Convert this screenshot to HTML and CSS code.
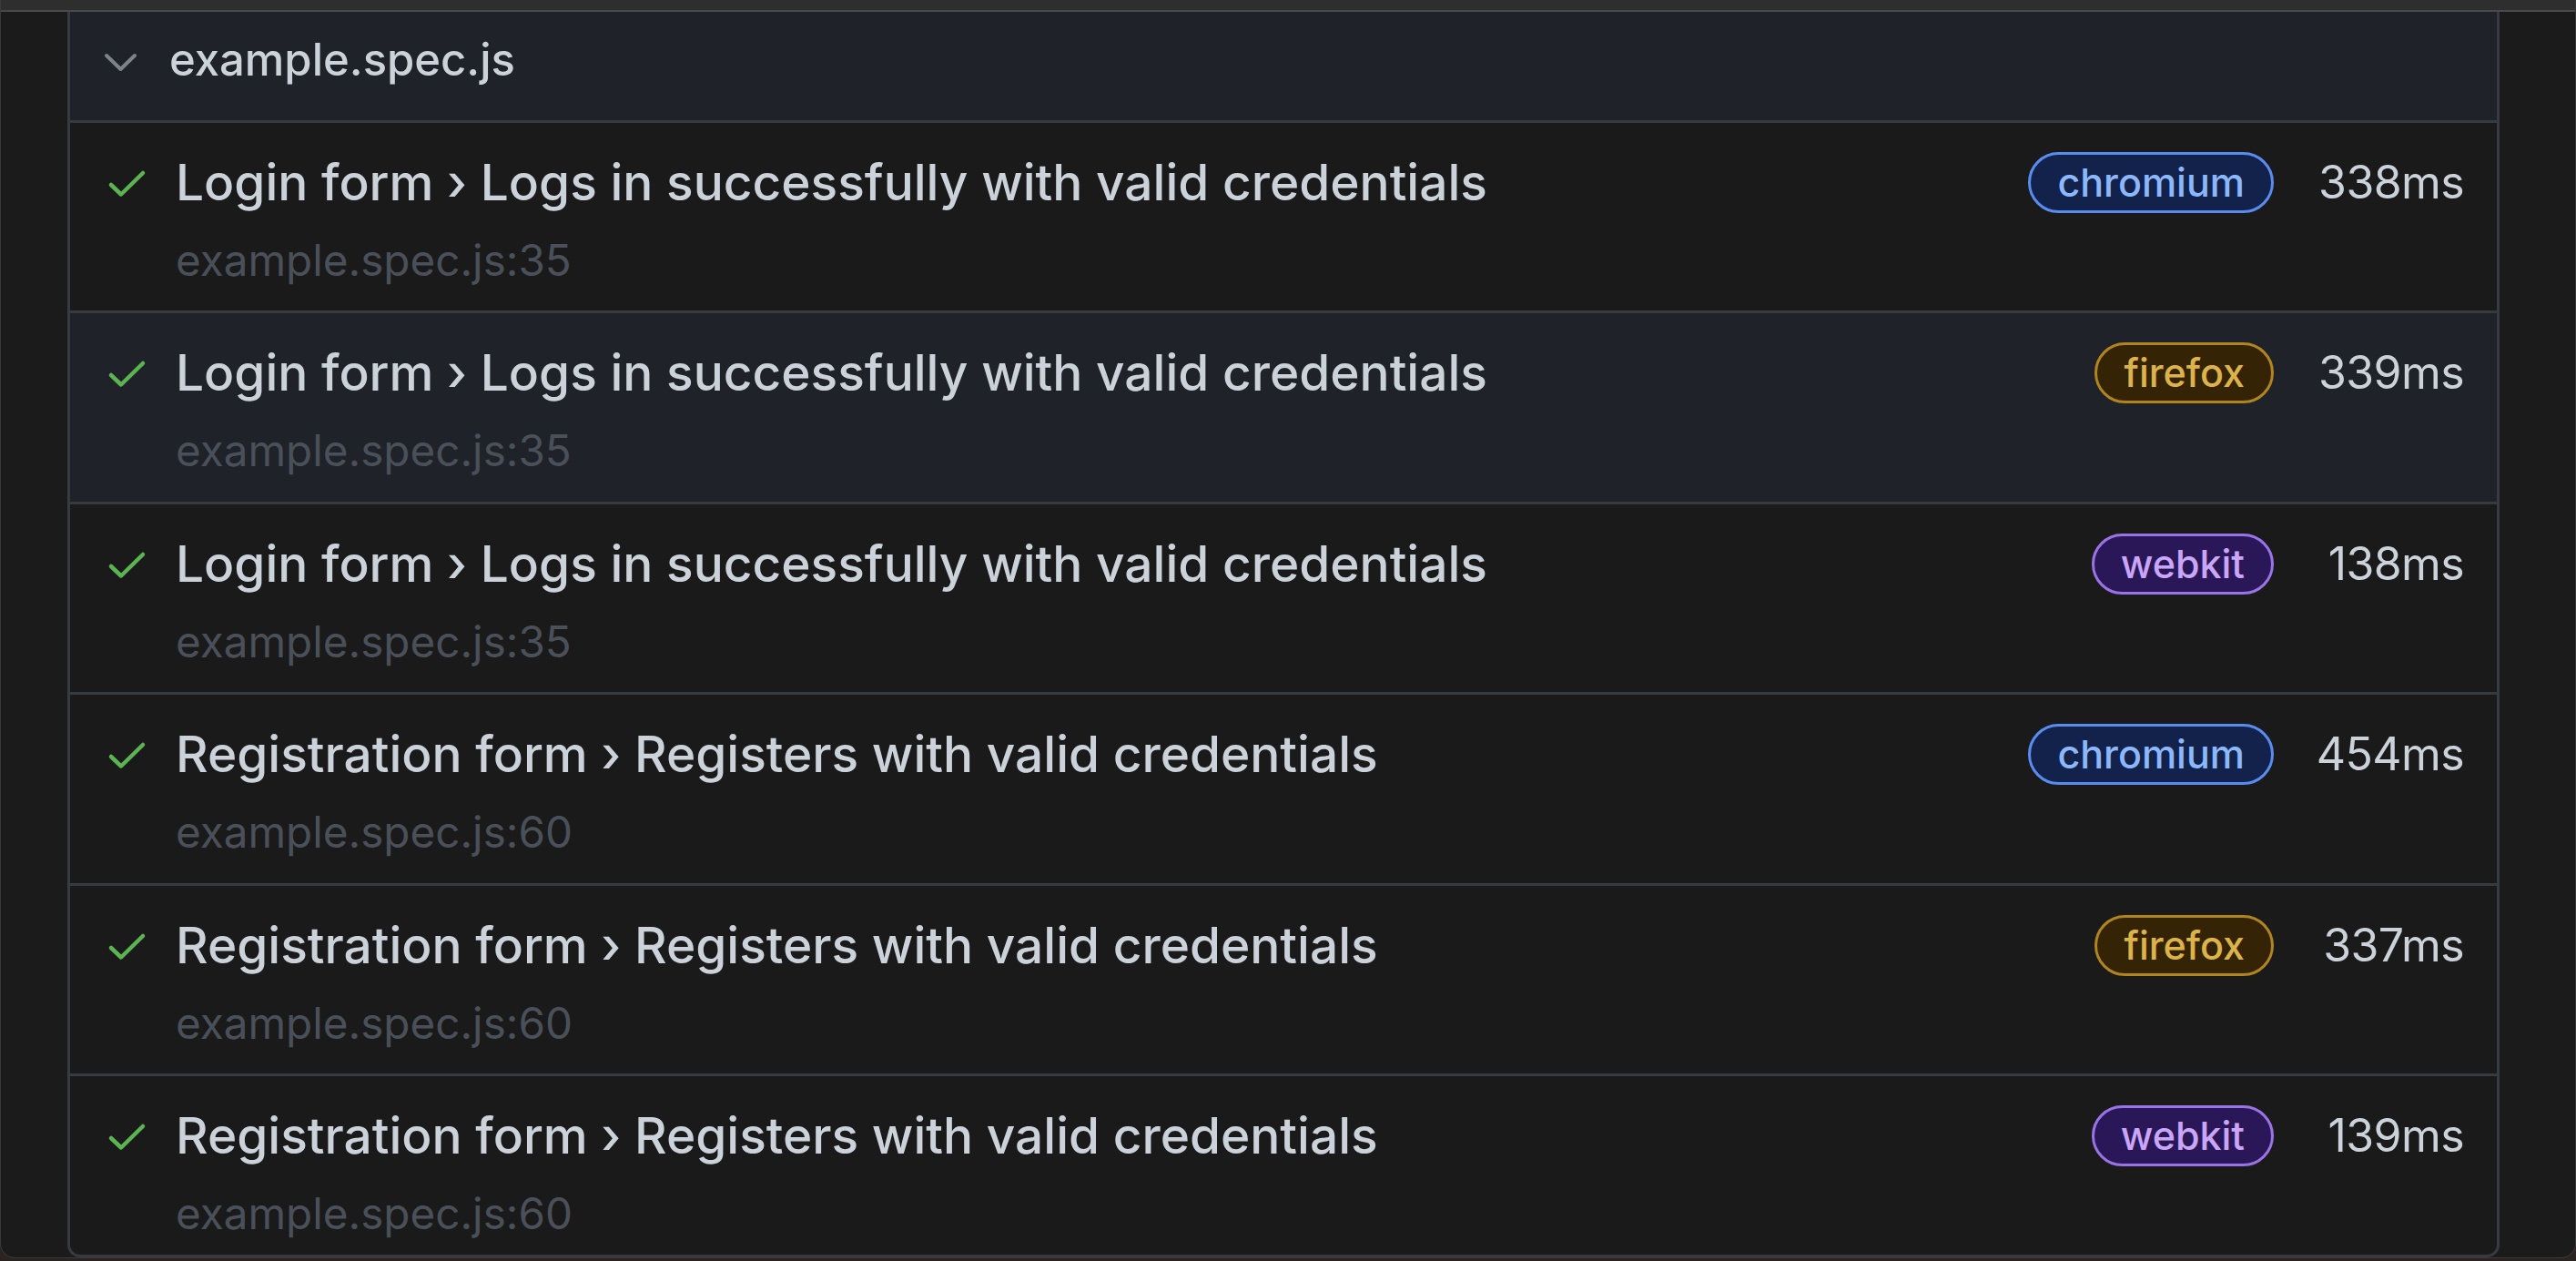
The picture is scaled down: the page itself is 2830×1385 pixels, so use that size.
FILE: index.html
```html
<!DOCTYPE html>
<html lang="en">
<head>
<meta charset="utf-8">
<title>Test report</title>
<link rel="stylesheet" href="styles.css">
</head>
<body>
<div class="window">
  <div class="topbar"></div>
  <div class="content">
    <div class="card">
      <div class="file-header">
        <svg class="chevron" width="40" height="40" viewBox="0 0 40 40"><path d="M4 13 L19.5 28 L35 13" fill="none" stroke="#7d838c" stroke-width="4" stroke-linecap="round" stroke-linejoin="round"/></svg>
        <span class="file-name">example.spec.js</span>
      </div>

      <div class="test-row">
        <svg class="check" width="46" height="40" viewBox="0 0 46 40"><path d="M6 21 L17 31.5 L41 8" fill="none" stroke="#5cb352" stroke-width="4.5" stroke-linecap="round" stroke-linejoin="round"/></svg>
        <div class="test-info">
          <div class="test-title">Login form › Logs in successfully with valid credentials</div>
          <div class="test-loc">example.spec.js:35</div>
        </div>
        <span class="badge badge-chromium">chromium</span>
        <span class="duration">338ms</span>
      </div>

      <div class="test-row selected">
        <svg class="check" width="46" height="40" viewBox="0 0 46 40"><path d="M6 21 L17 31.5 L41 8" fill="none" stroke="#5cb352" stroke-width="4.5" stroke-linecap="round" stroke-linejoin="round"/></svg>
        <div class="test-info">
          <div class="test-title">Login form › Logs in successfully with valid credentials</div>
          <div class="test-loc">example.spec.js:35</div>
        </div>
        <span class="badge badge-firefox">firefox</span>
        <span class="duration">339ms</span>
      </div>

      <div class="test-row">
        <svg class="check" width="46" height="40" viewBox="0 0 46 40"><path d="M6 21 L17 31.5 L41 8" fill="none" stroke="#5cb352" stroke-width="4.5" stroke-linecap="round" stroke-linejoin="round"/></svg>
        <div class="test-info">
          <div class="test-title">Login form › Logs in successfully with valid credentials</div>
          <div class="test-loc">example.spec.js:35</div>
        </div>
        <span class="badge badge-webkit">webkit</span>
        <span class="duration">138ms</span>
      </div>

      <div class="test-row">
        <svg class="check" width="46" height="40" viewBox="0 0 46 40"><path d="M6 21 L17 31.5 L41 8" fill="none" stroke="#5cb352" stroke-width="4.5" stroke-linecap="round" stroke-linejoin="round"/></svg>
        <div class="test-info">
          <div class="test-title">Registration form › Registers with valid credentials</div>
          <div class="test-loc">example.spec.js:60</div>
        </div>
        <span class="badge badge-chromium">chromium</span>
        <span class="duration">454ms</span>
      </div>

      <div class="test-row">
        <svg class="check" width="46" height="40" viewBox="0 0 46 40"><path d="M6 21 L17 31.5 L41 8" fill="none" stroke="#5cb352" stroke-width="4.5" stroke-linecap="round" stroke-linejoin="round"/></svg>
        <div class="test-info">
          <div class="test-title">Registration form › Registers with valid credentials</div>
          <div class="test-loc">example.spec.js:60</div>
        </div>
        <span class="badge badge-firefox">firefox</span>
        <span class="duration">337ms</span>
      </div>

      <div class="test-row last">
        <svg class="check" width="46" height="40" viewBox="0 0 46 40"><path d="M6 21 L17 31.5 L41 8" fill="none" stroke="#5cb352" stroke-width="4.5" stroke-linecap="round" stroke-linejoin="round"/></svg>
        <div class="test-info">
          <div class="test-title">Registration form › Registers with valid credentials</div>
          <div class="test-loc">example.spec.js:60</div>
        </div>
        <span class="badge badge-webkit">webkit</span>
        <span class="duration">139ms</span>
      </div>
    </div>
  </div>
</div>
</body>
</html>
```

FILE: styles.css
```css
html, body {
  margin: 0;
  padding: 0;
}

body {
  background: #2a2320;
  width: 2830px;
  height: 1385px;
  overflow: hidden;
  font-family: Inter, "Noto Sans", "Liberation Sans", sans-serif;
}

.window {
  box-sizing: border-box;
  width: 2830px;
  height: 1382px;
  background: #1b1b1b;
  border: 1px solid #3a3a3a;
  border-top: 0;
  border-radius: 0 0 16px 16px;
  display: flex;
  flex-direction: column;
  overflow: hidden;
}

.topbar {
  height: 11px;
  background: #2e2e2e;
  border-bottom: 2px solid #4a4a4a;
  flex: none;
}

.content {
  flex: 1;
  display: flex;
  padding: 0 83px 0 73px;
  min-height: 0;
}

.card {
  flex: 1;
  box-sizing: border-box;
  border: 3px solid #363a41;
  border-top: 0;
  border-radius: 0 0 14px 14px;
  overflow: hidden;
  display: flex;
  flex-direction: column;
  background: #1a1a1a;
}

.file-header {
  box-sizing: border-box;
  height: 122px;
  flex: none;
  background: #1f2228;
  border-bottom: 3px solid #363a41;
  display: flex;
  align-items: flex-start;
  padding: 23px 0 0 36px;
}

.chevron {
  flex: none;
  margin-top: 12px;
}

.file-name {
  margin-left: 33px;
  font-size: 49px;
  line-height: 60px;
  font-weight: 500;
  color: #cbd2da;
}

.test-row {
  box-sizing: border-box;
  height: 209.4px;
  flex: none;
  border-bottom: 3px solid #363a41;
  display: flex;
  align-items: flex-start;
  padding: 32px 36px 0 39px;
}

.test-row.selected {
  background: #1f2228;
}

.test-row.last {
  flex: 1;
  height: auto;
  border-bottom: 0;
}

.check {
  flex: none;
  margin-top: 15px;
}

.test-info {
  flex: 1;
  margin-left: 31px;
  min-width: 0;
}

.test-title {
  font-size: 55px;
  line-height: 66px;
  font-weight: 500;
  color: #cbd2da;
  white-space: nowrap;
}

.test-loc {
  margin-top: 25px;
  font-size: 47.6px;
  line-height: 56px;
  color: #4a5059;
  white-space: nowrap;
}

.badge {
  flex: none;
  box-sizing: border-box;
  height: 67px;
  padding: 0 29px;
  border: 3px solid;
  border-radius: 34px;
  font-size: 43px;
  line-height: 61px;
  font-weight: 500;
}

.badge-chromium {
  background: #13224b;
  border-color: #5a8cf0;
  color: #8cb8fb;
}

.badge-firefox {
  background: #352305;
  border-color: #b0841f;
  color: #dcb34b;
}

.badge-webkit {
  background: #2a1757;
  border-color: #9a74e6;
  color: #caa6f8;
}

.duration {
  flex: none;
  width: 170px;
  margin-left: 39px;
  text-align: right;
  font-size: 50px;
  line-height: 66px;
  letter-spacing: -0.6px;
  color: #cbd2da;
}
```
